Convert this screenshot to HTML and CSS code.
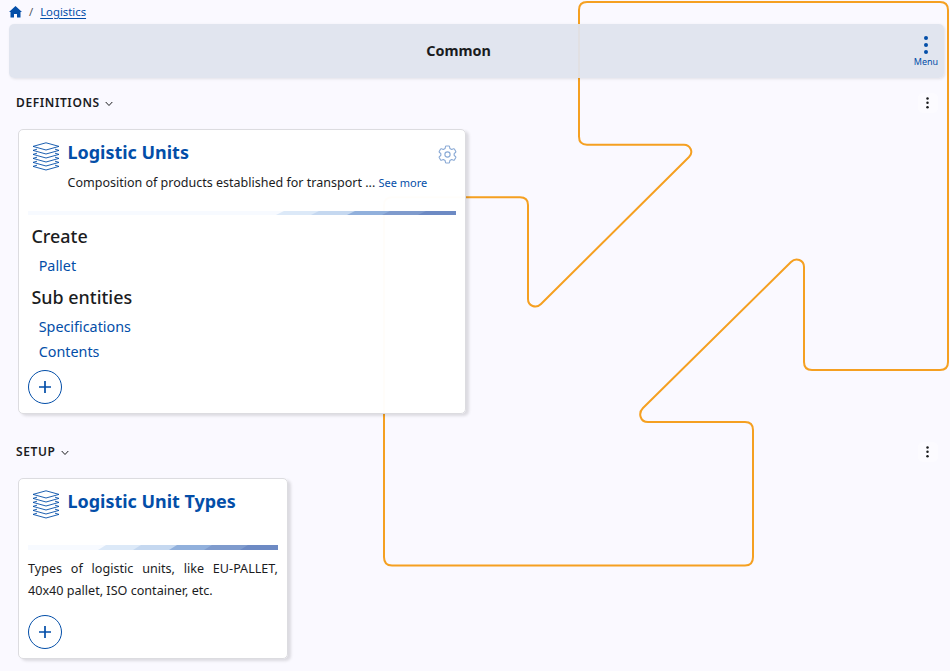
FILE: index.html
```html
<!DOCTYPE html>
<html lang="en">
<head>
<meta charset="utf-8">
<title>Logistics</title>
<link rel="stylesheet" href="styles.css">
</head>
<body>
<svg width="0" height="0" class="defs" aria-hidden="true">
  <symbol id="layers" viewBox="0 0 28 29"><path fill="none" stroke="currentColor" stroke-width=".9" stroke-linejoin="round" d="M14 .8 27 4.400 14 8 1 4.400ZM5 7.200 1 8.400 14 12 27 8.400 23 7.200M5 11.200 1 12.400 14 16 27 12.400 23 11.200M5 15.200 1 16.400 14 20 27 16.400 23 15.200M5 19.200 1 20.400 14 24 27 20.400 23 19.200M5 23.200 1 24.400 14 28 27 24.400 23 23.200"/></symbol>
  <symbol id="chevron" viewBox="0 0 8 6"><path fill="none" stroke="currentColor" d="m.7 1 3.3 3.5L7.300 1"/></symbol>
  <symbol id="plus" viewBox="0 0 12 12"><path fill="none" stroke="currentColor" stroke-width="1.7" d="M6 0v12M0 6h12"/></symbol>
  <symbol id="dots" viewBox="0 0 4 12"><g fill="currentColor"><circle cx="1.500" cy="1.500" r="1.250"/><circle cx="1.500" cy="5.800" r="1.250"/><circle cx="1.500" cy="10.200" r="1.250"/></g></symbol>
  <symbol id="ribbon" viewBox="0 0 250 4" preserveAspectRatio="none"><path fill="#dce9f8" d="M78 0h172v4H70z"/><path fill="#c5d8f0" d="M113 0h137v4H105z"/><path fill="#91b0dc" d="M149 0h101v4H141z"/><path fill="#7f9bcd" d="M184 0h66v4h-74z"/><path fill="#6d8ac4" d="M220 0h30v4h-38z"/></symbol>
</svg>
<svg class="outline" viewBox="0 0 950 671" aria-hidden="true"><path d="M587 2H940Q948 2 948 10V362Q948 370 940 370H812Q804 370 804 362V267C804 260 796 257 791 262L643 408C638 413 640 422 648 422H745Q753 422 753 430V557Q753 565.500 745 565.500H392Q384 565.500 384 557V205Q384 197.300 392 197.300H520Q528 197.300 528 205V299C528 306 536 309 541 304L689 157C694 152 690 144.700 684 144.700H587Q579 144.700 579 136.500V10Q579 2 587 2Z"/></svg>
<nav class="crumbs">
  <svg class="home" viewBox="0 0 13 12"><path fill="currentColor" d="M6.500 0 13 6H11.500V11.500H8V8H5V11.500H1.500V6H0Z"/></svg>
  <span class="slash">/</span><a href="#">Logistics</a>
</nav>
<header class="bar"><h1>Common</h1><button class="menu"><svg viewBox="0 0 4 18"><g fill="currentColor"><circle cx="2" cy="2" r="2"/><circle cx="2" cy="9" r="2"/><circle cx="2" cy="16" r="2"/></g></svg><span>Menu</span></button></header>
<section class="group">
  <div class="heading"><h2>DEFINITIONS</h2><svg class="chevron"><use href="#chevron"/></svg><button class="more"><svg><use href="#dots"/></svg></button></div>
  <article class="card units">
    <div class="top"><svg class="layers"><use href="#layers"/></svg><h3>Logistic Units</h3><svg class="gear" viewBox="0 0 24 24"><g fill="none" stroke="currentColor" stroke-width="1.400" stroke-linejoin="round"><circle cx="12" cy="12" r="3.300"/><path d="M10.200 1.200h3.600q.6 0 .7.700l.5 2.500 2.300 1.300 2.400-.9q.7-.2 1 .3l1.800 3.100q.3.600-.2 1l-1.900 1.700v2.200l1.900 1.700q.5.400.2 1l-1.800 3.100q-.3.500-1 .3l-2.400-.9L15 19.600l-.5 2.500q-.1.700-.7.700h-3.600q-.6 0-.7-.7L9 19.600l-2.300-1.300-2.400.9q-.7.200-1-.3l-1.800-3.100q-.3-.6.200-1l1.900-1.700v-2.200L1.700 9.200q-.5-.4-.2-1l1.800-3.100q.3-.5 1-.3l2.400.9L9 4.400l.5-2.500q.1-.7.700-.7Z"/></g></svg></div>
    <p class="summary">Composition of products established for transport ... <a href="#">See more</a></p>
    <div class="ribbon"><svg><use href="#ribbon"/></svg></div>
    <h4>Create</h4>
    <ul><li><a href="#">Pallet</a></li></ul>
    <h4>Sub entities</h4>
    <ul><li><a href="#">Specifications</a></li><li><a href="#">Contents</a></li></ul>
    <button class="add"><svg><use href="#plus"/></svg></button>
  </article>
</section>
<section class="group setup">
  <div class="heading"><h2>SETUP</h2><svg class="chevron"><use href="#chevron"/></svg><button class="more"><svg><use href="#dots"/></svg></button></div>
  <article class="card types">
    <div class="top"><svg class="layers"><use href="#layers"/></svg><h3>Logistic Unit Types</h3></div>
    <div class="ribbon"><svg><use href="#ribbon"/></svg></div>
    <p class="description">Types of logistic units, like EU-PALLET, 40x40 pallet, ISO container, etc.</p>
    <button class="add"><svg><use href="#plus"/></svg></button>
  </article>
</section>
</body>
</html>
```
FILE: styles.css
```css
* { box-sizing: border-box; }
body { margin: 0; height: 671px; overflow: hidden; position: relative; background: #faf9ff; color: #1b1c1e; font-family: "Noto Sans", sans-serif; font-size: 12px; }
h1, h2, h3, h4, p, ul { margin: 0; padding: 0; }
ul { list-style: none; }
a, .home, .menu, .layers, .add { color: #034ea8; }
a { text-decoration: none; }
svg { display: block; flex: none; }
button { padding: 0; border: 0; background: none; font: inherit; }
.defs { position: absolute; }
.outline { position: absolute; inset: 0; width: 950px; height: 671px; z-index: -1; fill: none; stroke: #f5a021; stroke-width: 2; }
.crumbs { display: flex; align-items: center; height: 24px; padding: 0 0 1px 9px; font-size: 11.300px; }
.crumbs a { text-decoration: underline; text-underline-offset: 2px; }
.home { width: 13px; height: 12px; }
.slash { margin: 0 7px; color: #55585e; }
.bar { display: flex; align-items: center; height: 54px; margin: 0 6px 0 9px; padding-right: 4px; border-radius: 5px; background: rgba(223, 228, 238, .95); box-shadow: 1px 1px 3px rgba(0, 0, 0, .1); }
.bar h1 { flex: 1; padding-right: 4px; text-align: center; font-size: 14.400px; line-height: 20px; }
.menu { display: flex; flex-direction: column; align-items: center; width: 28px; margin-top: 1px; font-size: 9px; line-height: 12px; }
.menu svg { width: 4px; height: 18px; margin-bottom: 2px; }
.heading { display: flex; align-items: center; height: 20px; margin: 15px 12px 16px 16px; }
.heading h2 { font-size: 12px; font-weight: 600; letter-spacing: .6px; line-height: 20px; }
.chevron { width: 8px; height: 6px; margin: 1px 0 0 5px; }
.setup .chevron { margin-left: 6px; }
.more { display: grid; place-items: center; width: 20px; height: 20px; margin-left: auto; border-radius: 5px; background: #fcfbff; color: #1b1c1e; }
.more svg { width: 4px; height: 12px; }
.card { margin-left: 18px; padding: 9px; border: 1px solid #dcdce0; border-radius: 5px; background: rgba(255, 255, 255, .98); box-shadow: 3px 2px 3px rgba(0, 0, 0, .12); }
.units { width: 448px; height: 285px; }
.types { width: 270px; height: 181px; }
.top { display: flex; align-items: flex-start; height: 35px; padding-left: 4px; }
.layers { width: 28px; height: 29px; margin-top: 3px; }
.types .layers { margin-top: 2px; }
.top h3 { margin-left: 7.500px; font-size: 17.950px; line-height: 26px; color: #034ea8; }
.gear { width: 19px; height: 19px; margin: 6px -1px 0 auto; color: #89a9d5; }
.summary { height: 37px; margin-left: 39.500px; font-size: 12.530px; line-height: 18px; white-space: nowrap; }
.summary a { font-size: 11px; }
.ribbon { display: flex; justify-content: flex-end; height: 4px; background: #f7faff; }
.ribbon svg { width: 250px; height: 100%; }
.card h4 { padding-left: 3.500px; font-size: 17.900px; font-weight: 500; line-height: 26px; }
.units .ribbon + h4 { margin-top: 8px; }
.card ul { margin-top: 4px; }
.card li { height: 25px; padding-left: 10.700px; font-size: 14.350px; line-height: 25px; }
.card ul + h4 { margin-top: 6px; }
.add { display: grid; place-items: center; width: 34px; height: 34px; border: 1px solid; border-radius: 50%; }
.units .add { margin-top: 6px; }
.add svg { width: 12px; height: 12px; }
.setup .heading { margin-top: 28px; }
.types .ribbon { margin-top: 22px; height: 5px; }
.description { margin-top: 8px; font-size: 12.600px; line-height: 22px; text-align: justify; }
.types .add { margin-top: 13px; }
```
